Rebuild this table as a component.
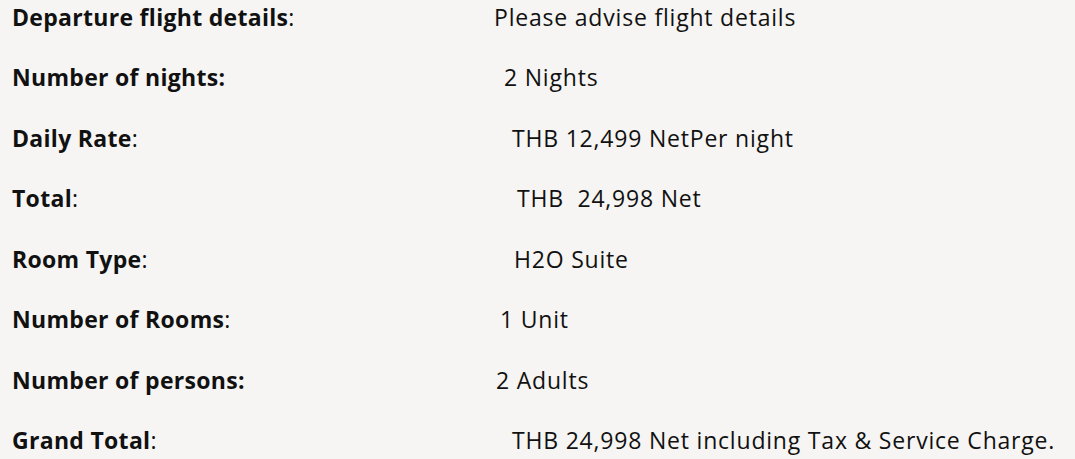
const rows: { label: string; boldColon: boolean; value: string; indent: string }[] = [
  { label: "Departure flight details", boldColon: false, value: "Please advise flight details", indent: "pl-[494px]" },
  { label: "Number of nights", boldColon: true, value: "2 Nights", indent: "pl-[504px]" },
  { label: "Daily Rate", boldColon: false, value: "THB 12,499 NetPer night", indent: "pl-[512px]" },
  { label: "Total", boldColon: false, value: "THB\u00a0 24,998 Net", indent: "pl-[517px]" },
  { label: "Room Type", boldColon: false, value: "H2O Suite", indent: "pl-[514px]" },
  { label: "Number of Rooms", boldColon: false, value: "1 Unit", indent: "pl-[500px]" },
  { label: "Number of persons", boldColon: true, value: "2 Adults", indent: "pl-[496px]" },
  { label: "Grand Total", boldColon: false, value: "THB 24,998 Net including Tax & Service Charge.", indent: "pl-[512px]" },
];

export default function App() {
  return (
    <div className="h-[459px] w-[1075px] overflow-hidden bg-[#f6f5f3] pt-[2px] font-['Open_Sans','Liberation_Sans',sans-serif] text-[23px] leading-[30px] text-[#111]">
      {rows.map((r) => (
        <div key={r.label} className="relative h-[60.43px] whitespace-pre">
          <div className="absolute left-[12px] top-0">
            <span className="font-bold tracking-[0.3px]">{r.label}</span>
            <span className={r.boldColon ? "font-bold" : ""}>:</span>
          </div>
          <div className={`${r.indent} tracking-[0.8px]`}>{r.value}</div>
        </div>
      ))}
    </div>
  );
}
